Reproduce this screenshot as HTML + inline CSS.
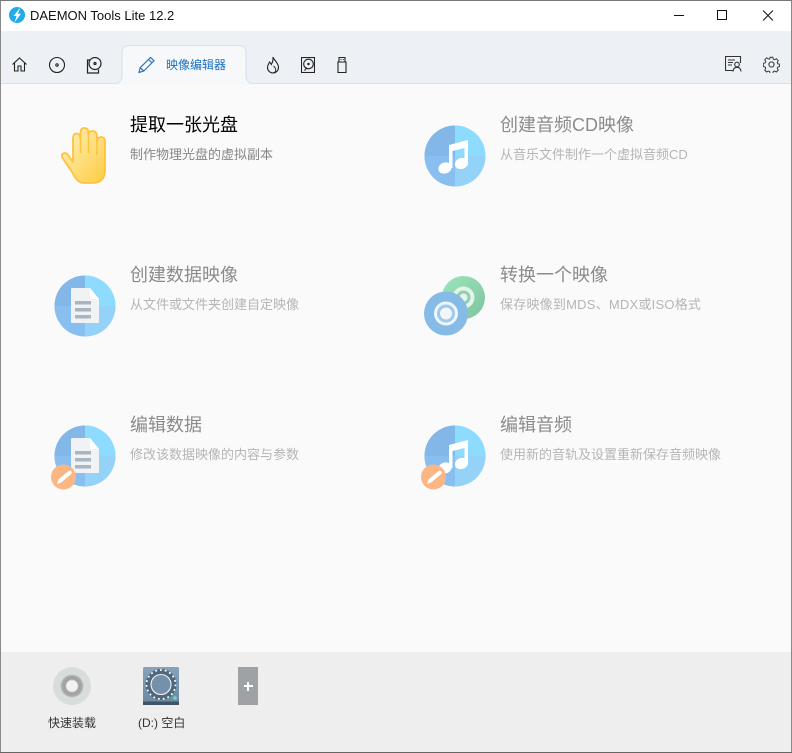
<!DOCTYPE html>
<html lang="zh"><head><meta charset="utf-8"><title>DAEMON Tools Lite 12.2</title>
<style>
html,body{margin:0;padding:0;width:792px;height:753px;overflow:hidden;background:#fafafa}
body{position:relative;font-family:"Liberation Sans","Noto Sans CJK SC",sans-serif}
div,svg{position:absolute}
.t{font-size:18px;line-height:24px;color:#8b8b8b;white-space:nowrap}
.d{font-size:13px;line-height:18px;color:#b5b5b5;white-space:nowrap}
.b{filter:blur(.35px)}
</style></head><body>
<div style="left:0;top:0;width:792px;height:31px;background:#fff"></div>
<div style="left:0;top:31px;width:792px;height:52px;background:#edf0f5"></div>
<div style="left:0;top:83px;width:792px;height:1px;background:#d6e1ee"></div>
<div style="left:0;top:652px;width:792px;height:100px;background:#eeeeee"></div>

<!-- logo -->
<svg style="left:9px;top:7px" width="16" height="16" viewBox="0 0 16 16"><circle cx="8" cy="8" r="8" fill="#1fabec"/><path d="M11.500 .5 4.500 9h3L5.500 15.500 12 6.800H8.800z" fill="#fff"/></svg>
<div style="left:30px;top:7px;font-size:13px;line-height:18px;color:#111;white-space:nowrap">DAEMON Tools Lite 12.2</div>

<!-- window controls -->
<svg style="left:670px;top:8px" width="110" height="16" viewBox="0 0 110 16" fill="none" stroke="#111" stroke-width="1"><path d="M4 7.500h10"/><rect x="47.500" y="2.500" width="9" height="9"/><path d="M93 2.500l10 10M103 2.500l-10 10"/></svg>

<!-- tab -->
<svg style="left:111px;top:44px" width="150" height="41" viewBox="0 0 150 41"><path d="M0 39.500h3c5 0 8-2 8-8V8c0-4 3-6.500 7-6.500h110c4 0 7 2.500 7 6.500v23.500c0 6 3 8 8 8h7V41H0z" fill="#f6f8fa"/><path d="M0 39.500h3c5 0 8-2 8-8V8c0-4 3-6.500 7-6.500h110c4 0 7 2.500 7 6.500v23.500c0 6 3 8 8 8h7" fill="none" stroke="#d6e1ee"/></svg>
<svg style="left:137px;top:56px" width="19" height="18" viewBox="0 0 19 18" fill="none" stroke="#2f76b8" stroke-width="1.200"><path d="M2 16.500l1.200-4.800L13.500 1.500l3.500 3.300L6.800 15z M11.500 3.500l3.500 3.300M3.200 11.700l3.600 3.300"/></svg>
<div style="left:166px;top:56px;font-size:12px;line-height:18px;color:#1a6fc0;white-space:nowrap">映像编辑器</div>

<!-- left toolbar icons -->
<svg style="left:11px;top:56px" width="17" height="17" viewBox="0 0 17 17" fill="none" stroke="#222" stroke-width="1.100"><path d="M1.500 8.500 8.500 2l7 6.500M3.500 7v8h3.500v-5h3v5h3.500V7"/></svg>
<svg style="left:48px;top:56px" width="18" height="18" viewBox="0 0 18 18" fill="none" stroke="#222" stroke-width="1.100"><circle cx="9" cy="9" r="7.500"/><circle cx="9" cy="9" r="1.200"/></svg>
<svg style="left:86px;top:57px" width="16" height="17" viewBox="0 0 16 17" fill="none" stroke="#222" stroke-width="1.200"><path d="M4 3H1.500v13h11v-3.500"/><circle cx="9" cy="6.500" r="6"/><circle cx="9" cy="6.500" r="1"/></svg>
<svg style="left:266px;top:56px" width="14" height="18" viewBox="0 0 14 18" fill="none" stroke="#222" stroke-width="1.100"><path d="M7 1c.5 3 5.500 5.500 5.500 10.500A5.500 5.500 0 0 1 7 17a5.500 5.500 0 0 1-5.500-5.500C1.500 9 3 7.500 3.500 6 4.500 7 5 8 5.300 8.500 6.500 6.500 7.300 4 7 1z"/><path d="M7.500 10c1.500 1.500 2.300 2.800 2.300 4A2.800 2.800 0 0 1 7 16.800" stroke-width=".9"/></svg>
<svg style="left:301px;top:57px" width="14" height="16" viewBox="0 0 14 16" fill="none" stroke="#222" stroke-width="1.100"><rect x=".5" y=".5" width="13" height="15"/><circle cx="7.500" cy="7" r="4.800"/><circle cx="7.500" cy="7" r=".7"/><path d="M6 10.500 3.500 13.500"/></svg>
<svg style="left:337px;top:57px" width="10" height="16" viewBox="0 0 10 16" fill="none" stroke="#222" stroke-width="1.100"><path d="M2 5V.5h6V5M1 5h8v10.500H1z"/><path d="M3.500 2.500h1M5.800 2.500h1"/></svg>

<!-- right toolbar icons -->
<svg style="left:725px;top:56px" width="18" height="16" viewBox="0 0 18 16" fill="none" stroke="#333" stroke-width="1.100"><path d="M8 14.500H.5V.5h15V7"/><path d="M3 4h7M3 6.500h5M3 9h4"/><circle cx="12" cy="8.500" r="2.300"/><path d="M8 15.500c.3-3 2-4.200 4-4.200s3.700 1.200 4 4.200"/></svg>
<svg style="left:763px;top:56px" width="17" height="17" viewBox="0 0 17 17" fill="none" stroke="#333" stroke-width="1"><path d="M7 1h3l.4 2 1.500.7 1.800-1.100 2 2.100-1.100 1.800.6 1.500 2 .4v2.600l-2 .4-.6 1.500 1.100 1.800-2 2-1.800-1-1.500.6-.4 2H7l-.4-2-1.500-.6-1.800 1-2-2 1.100-1.800-.6-1.500-2-.4V7.400l2-.4.6-1.500L1.300 3.700l2-2.100 1.800 1.100L6.600 3z" transform="translate(.5 .3) scale(.94)"/><circle cx="8.500" cy="8.500" r="2.600"/></svg>

<!-- hand -->
<svg style="left:58px;top:126px" width="50" height="60" viewBox="58 126 50 60"><defs><linearGradient id="h" x1="0" y1="0" x2="1" y2="1"><stop offset="0" stop-color="#fff2c0"/><stop offset="1" stop-color="#fdcb40"/></linearGradient></defs><path d="M72 172 62.500 158Q61 155 63 153.500 66 152 68 155L73 162V139Q73 133.500 76.500 133.500 80 133.500 80.500 139V133Q80.500 128 84.500 128 88.500 128 88.500 133V135Q88.500 131 92.500 131 96.500 131 97 136V141.500Q97.500 137 101 137 105 137 105 141.500V170Q105 183 92 183H84Q77 183 72 172Z" fill="url(#h)" stroke="#fcc43e" stroke-width="1.800" stroke-linejoin="round"/><path d="M80.500 138V153M88.500 135V153M97 141V155" stroke="#fcc43e" stroke-width="1.500" fill="none"/></svg>
<div class="t" style="left:130px;top:113px;color:#000">提取一张光盘</div>
<div class="d" style="left:130px;top:146px;color:#868686">制作物理光盘的虚拟副本</div>

<!-- music -->
<svg class="b" style="left:424px;top:125px" width="62" height="62" viewBox="0 0 62 62"><circle cx="31" cy="31" r="30.500" fill="#88c2f0"/><path d="M31 .5A30.500 30.500 0 0 0 .5 31H31z" fill="#83b7e8"/><path d="M31 .5A30.500 30.500 0 0 1 61.500 31H31z" fill="#8ddcff"/><path d="M31 31H61.500A30.500 30.500 0 0 1 31 61.500z" fill="#94d2f8"/><path d="M.5 31H31V61.500A30.500 30.500 0 0 1 .5 31z" fill="#88bff0"/><g fill="#fff"><path d="M25 20 44 15v24h-3.500V23l-12 3V43H25z"/><ellipse cx="21" cy="43" rx="6.800" ry="5.500" transform="rotate(-20 21 43)"/><ellipse cx="37.500" cy="38.500" rx="6.800" ry="5.500" transform="rotate(-20 37.500 38.500)"/></g></svg>
<div class="t" style="left:500px;top:113px">创建音频CD映像</div>
<div class="d" style="left:500px;top:146px">从音乐文件制作一个虚拟音频CD</div>

<!-- data image -->
<svg class="b" style="left:54px;top:275px" width="62" height="62" viewBox="0 0 62 62"><circle cx="31" cy="31" r="30.500" fill="#88c2f0"/><path d="M31 .5A30.500 30.500 0 0 0 .5 31H31z" fill="#83b7e8"/><path d="M31 .5A30.500 30.500 0 0 1 61.500 31H31z" fill="#8ddcff"/><path d="M31 31H61.500A30.500 30.500 0 0 1 31 61.500z" fill="#94d2f8"/><path d="M.5 31H31V61.500A30.500 30.500 0 0 1 .5 31z" fill="#88bff0"/><path d="M18 13h18l9 11v24H18a1 1 0 0 1-1-1V14a1 1 0 0 1 1-1z" fill="#f0f2f4"/><path d="M36 13l9 11h-9z" fill="#fff"/><g fill="#a9b6c0"><rect x="21" y="26" width="16" height="3.500"/><rect x="21" y="33" width="16" height="3.500"/><rect x="21" y="40" width="16" height="3.500"/></g></svg>
<div class="t" style="left:130px;top:263px">创建数据映像</div>
<div class="d" style="left:130px;top:296px">从文件或文件夹创建自定映像</div>

<!-- convert -->
<svg class="b" style="left:424px;top:275px" width="62" height="62" viewBox="0 0 62 62"><defs><linearGradient id="g" x1="0" y1="0" x2="1" y2="1"><stop offset="0" stop-color="#9ce6bb"/><stop offset="1" stop-color="#7fc2a0"/></linearGradient></defs><circle cx="39.500" cy="22.500" r="21.500" fill="url(#g)"/><circle cx="39.500" cy="22.500" r="11" fill="#e4f4ea"/><circle cx="39.500" cy="22.500" r="7" fill="#8fd0ab"/><circle cx="39.500" cy="22.500" r="4" fill="#e4f4ea"/><circle cx="22" cy="38.500" r="22" fill="#85bbe6"/><circle cx="22" cy="38.500" r="12" fill="#eef6fb"/><circle cx="22" cy="38.500" r="9" fill="#9cc9ec"/><circle cx="22" cy="38.500" r="6" fill="#f2f6f9"/></svg>
<div class="t" style="left:500px;top:263px">转换一个映像</div>
<div class="d" style="left:500px;top:296px;letter-spacing:.22px">保存映像到MDS、MDX或ISO格式</div>

<!-- edit data -->
<svg class="b" style="left:50px;top:425px" width="66" height="66" viewBox="0 0 66 66"><g transform="translate(4 0)"><circle cx="31" cy="31" r="30.500" fill="#88c2f0"/><path d="M31 .5A30.500 30.500 0 0 0 .5 31H31z" fill="#83b7e8"/><path d="M31 .5A30.500 30.500 0 0 1 61.500 31H31z" fill="#8ddcff"/><path d="M31 31H61.500A30.500 30.500 0 0 1 31 61.500z" fill="#94d2f8"/><path d="M.5 31H31V61.500A30.500 30.500 0 0 1 .5 31z" fill="#88bff0"/><path d="M18 13h18l9 11v24H18a1 1 0 0 1-1-1V14a1 1 0 0 1 1-1z" fill="#f0f2f4"/><path d="M36 13l9 11h-9z" fill="#fff"/><g fill="#a9b6c0"><rect x="21" y="26" width="16" height="3.500"/><rect x="21" y="33" width="16" height="3.500"/><rect x="21" y="40" width="16" height="3.500"/></g></g><circle cx="13.500" cy="52" r="12.500" fill="#fbb684"/><path d="M7 59l1.500-4.500 10-8.500q1.500-1 2.700.3t0 2.700l-10 8.500z" fill="#fff"/></svg>
<div class="t" style="left:130px;top:413px">编辑数据</div>
<div class="d" style="left:130px;top:446px">修改该数据映像的内容与参数</div>

<!-- edit audio -->
<svg class="b" style="left:420px;top:425px" width="66" height="66" viewBox="0 0 66 66"><g transform="translate(4 0)"><circle cx="31" cy="31" r="30.500" fill="#88c2f0"/><path d="M31 .5A30.500 30.500 0 0 0 .5 31H31z" fill="#83b7e8"/><path d="M31 .5A30.500 30.500 0 0 1 61.500 31H31z" fill="#8ddcff"/><path d="M31 31H61.500A30.500 30.500 0 0 1 31 61.500z" fill="#94d2f8"/><path d="M.5 31H31V61.500A30.500 30.500 0 0 1 .5 31z" fill="#88bff0"/><g fill="#fff"><path d="M25 20 44 15v24h-3.500V23l-12 3V43H25z"/><ellipse cx="21" cy="43" rx="6.800" ry="5.500" transform="rotate(-20 21 43)"/><ellipse cx="37.500" cy="38.500" rx="6.800" ry="5.500" transform="rotate(-20 37.500 38.500)"/></g></g><circle cx="13.500" cy="52" r="12.500" fill="#fbb684"/><path d="M7 59l1.500-4.500 10-8.500q1.500-1 2.700.3t0 2.700l-10 8.500z" fill="#fff"/></svg>
<div class="t" style="left:500px;top:413px">编辑音频</div>
<div class="d" style="left:500px;top:446px">使用新的音轨及设置重新保存音频映像</div>

<!-- bottom bar -->
<svg class="b" style="left:53px;top:667px" width="38" height="38" viewBox="0 0 38 38"><defs><radialGradient id="rg"><stop offset=".45" stop-color="#f2f2f2"/><stop offset=".6" stop-color="#9f9f9f"/><stop offset=".85" stop-color="#a8a8a8"/><stop offset="1" stop-color="#c4c6c6"/></radialGradient></defs><circle cx="19" cy="19" r="19" fill="#d8dcdc"/><circle cx="19" cy="19" r="11.500" fill="url(#rg)"/></svg>
<div style="left:48px;top:715px;font-size:12px;line-height:17px;color:#333;white-space:nowrap">快速装载</div>

<svg style="left:143px;top:667px" width="36" height="38" viewBox="0 0 36 38"><defs><linearGradient id="dv" x1="0" y1="0" x2="0" y2="1"><stop offset="0" stop-color="#86a2bd"/><stop offset="1" stop-color="#6a88a2"/></linearGradient></defs><rect x="0" y="0" width="36" height="38" rx="1.500" fill="url(#dv)"/><rect x="0" y="34.500" width="36" height="3.500" fill="#3f5566"/><circle cx="18" cy="17.500" r="15.500" fill="#4f687d"/><circle cx="18" cy="17.500" r="14.500" fill="none" stroke="#fff" stroke-width="1.700" stroke-dasharray="1.800 3"/><circle cx="18" cy="17.500" r="10" fill="#7490aa" stroke="#eef2f5" stroke-width="1.100"/><circle cx="32" cy="31" r="1.800" fill="#5fe0b0"/></svg>
<div style="left:138px;top:715px;font-size:12px;line-height:17px;color:#333;white-space:nowrap">(D:) 空白</div>

<div style="left:238px;top:667px;width:20px;height:38px;background:#9ea2a4"></div>
<div style="left:244px;top:685px;width:9px;height:2px;background:#fff"></div>
<div style="left:247px;top:682px;width:2px;height:9px;background:#fff"></div>

<!-- window border -->
<div style="left:0;top:0;width:1px;height:753px;background:#8a8a8a"></div>
<div style="left:791px;top:0;width:1px;height:753px;background:#8a8a8a"></div>
<div style="left:0;top:0;width:792px;height:1px;background:#777"></div>
<div style="left:0;top:752px;width:792px;height:1px;background:#666"></div>
</body></html>
